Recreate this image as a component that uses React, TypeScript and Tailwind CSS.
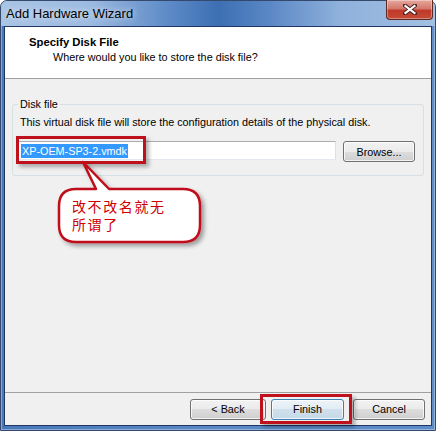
import React from "react";

const btn =
  "h-[21px] rounded-[3px] border text-[10.8px] text-black flex items-center justify-center shadow-[inset_0_0_0_1px_rgba(255,255,255,0.75)]";
const grayBtn =
  "border-[#707070] bg-[linear-gradient(180deg,#f2f2f2_0%,#ebebeb_50%,#dddddd_50%,#cfcfcf_100%)]";

const App = () => {
  return (
    <div className="relative w-[436px] h-[431px] font-['Liberation_Sans',Arial,sans-serif]">
      {/* window frame */}
      <div className="w-full h-full flex flex-col rounded-t-[7px] border border-[#34496b] bg-[linear-gradient(90deg,#4978ba_0%,#5a88c6_50%,#5d8cc9_100%)] shadow-[inset_0_0_0_1px_rgba(255,255,255,0.35)]">
        {/* title bar */}
        <div className="h-[25px] flex items-start justify-between rounded-t-[6px] bg-[linear-gradient(90deg,#a9c4e4_0%,#9dbbe0_20%,#5f8cc8_38%,#3d6fb3_50%,#5b88c5_62%,#8fb1dc_78%,#a3c0e3_100%)]">
          <div className="pl-[5px] pt-[5px] text-[13px] leading-[16px] text-black [text-shadow:0_0_6px_rgba(255,255,255,0.9)]">
            Add Hardware Wizard
          </div>
          <div className="-mt-[1px] mr-[2px] w-[47px] h-[20px] rounded-b-[4px] border border-[#5b2a25] border-t-0 bg-[linear-gradient(180deg,#e6a89e_0%,#d4786c_45%,#c0392a_55%,#c64a36_100%)] flex items-center justify-center shadow-[inset_0_0_0_1px_rgba(255,255,255,0.35)]">
            <svg width="14" height="11" viewBox="0 0 14 11">
              <path d="M2 1.5 L12 9.5 M12 1.5 L2 9.5" stroke="#4a2020" strokeWidth="4" strokeLinecap="square" />
              <path d="M2.5 2 L11.5 9 M11.5 2 L2.5 9" stroke="#ffffff" strokeWidth="2.2" strokeLinecap="square" />
            </svg>
          </div>
        </div>

        {/* client area */}
        <div className="flex-1 ml-[3px] mr-[3px] mb-[4px] border border-[#1f3563] bg-[#f0f0f0] flex flex-col">
          {/* header */}
          <div className="h-[52px] bg-white border-b border-[#a0a0a0] pt-[8px] pl-[24px] text-[11.3px] leading-[14px] text-black">
            <div className="font-bold">Specify Disk File</div>
            <div className="pl-[24px] mt-[1px] text-[10.8px]">Where would you like to store the disk file?</div>
          </div>

          {/* body */}
          <div className="flex-1">
            <fieldset className="mt-[18px] ml-[7px] w-[412px] rounded-[3px] border border-[#d5dfe5] pl-[5px] pr-[8px] pb-[13px] text-[10.8px] leading-[14px] text-black">
              <legend className="ml-0 px-[2px]">Disk file</legend>
              <div className="pl-[2px] mt-[4px]">
                This virtual disk file will store the configuration details of the physical disk.
              </div>
              <div className="mt-[12px] flex items-start">
                <div className="w-[318px] h-[19px] border border-[#abadb3] border-r-[#dbdfe6] border-b-[#e3e9ef] border-l-[#e2e3ea] bg-white flex items-center pl-[2px]">
                  <span className="bg-[#3399ff] text-white leading-[14px] px-[1px]">XP-OEM-SP3-2.vmdk</span>
                </div>
                <div className={`${btn} ${grayBtn} ml-[7px] w-[72px]`}>Browse...</div>
              </div>
            </fieldset>
          </div>

          {/* footer */}
          <div className="h-[33px] border-t border-[#a0a0a0] flex items-start justify-end pr-[6px] pt-[6px]">
            <div className={`${btn} ${grayBtn} w-[76px]`}>&lt; Back</div>
            <div
              className={`${btn} ml-[5px] w-[73px] border-[#3c7fb1] bg-[linear-gradient(180deg,#edf4f9_0%,#e1ecf4_50%,#cfe0ec_50%,#c5d9e8_100%)]`}
            >
              Finish
            </div>
            <div className={`${btn} ${grayBtn} ml-[9px] w-[72px]`}>Cancel</div>
          </div>
        </div>
      </div>

      {/* annotations */}
      <div className="absolute left-[16px] top-[136px] w-[130px] h-[28px] border-[3px] border-[#bf111b] shadow-[3px_3px_4px_rgba(0,0,0,0.3)] pointer-events-none" />
      <div className="absolute left-[260px] top-[394px] w-[92px] h-[30px] border-[3px] border-[#bf111b] shadow-[3px_3px_4px_rgba(0,0,0,0.3)] pointer-events-none" />

      <svg className="absolute left-0 top-0 pointer-events-none" width="436" height="431" viewBox="0 0 436 431">
        <defs>
          <filter id="sh" x="-20%" y="-20%" width="150%" height="150%">
            <feDropShadow dx="3" dy="3" stdDeviation="2" floodColor="#000" floodOpacity="0.35" />
          </filter>
        </defs>
        <path
          d="M76 189 L96 189 L83 162 L109 189 L183 189 Q200 189 200 206 L200 225 Q200 242 183 242 L76 242 Q59 242 59 225 L59 206 Q59 189 76 189 Z"
          fill="#ffffff"
          stroke="#c0101a"
          strokeWidth="2.5"
          strokeLinejoin="round"
          filter="url(#sh)"
        />
      </svg>
      <div className="absolute left-[72px] top-[197px] text-[14px] leading-[18px] tracking-[1.6px] text-[#d00000] font-['Noto_Sans_CJK_SC',sans-serif]">
        <div>改不改名就无</div>
        <div>所谓了</div>
      </div>
    </div>
  );
};

export default App;
